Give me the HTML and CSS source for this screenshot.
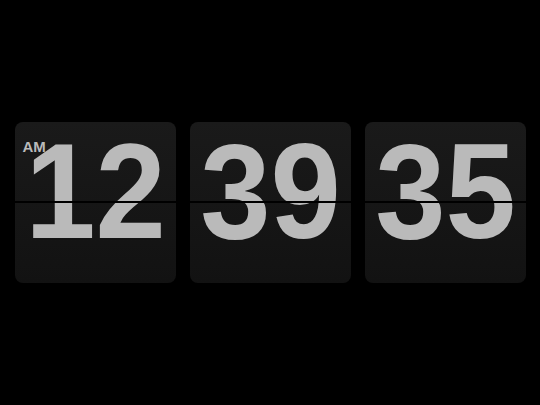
FILE: index.html
```html
<!DOCTYPE html>
<html>
<head>
<meta charset="utf-8">
<link rel="stylesheet" href="styles.css">
</head>
<body>
<div class="clock">
  <div class="card">
    <span class="ampm">AM</span>
    <div class="digits">12</div>
    <div class="split"></div>
  </div>
  <div class="card">
    <div class="digits">39</div>
    <div class="split"></div>
  </div>
  <div class="card">
    <div class="digits">35</div>
    <div class="split"></div>
  </div>
</div>
</body>
</html>
```
FILE: styles.css
```css
html, body {
  margin: 0;
  padding: 0;
  background: #000;
  width: 540px;
  height: 405px;
  overflow: hidden;
}
.clock {
  display: flex;
  gap: 14px;
  justify-content: center;
  align-items: center;
  height: 405px;
}
.card {
  position: relative;
  width: 161px;
  height: 161px;
  border-radius: 8px;
  background: linear-gradient(#1a1a1a, #121212);
}
.digits {
  font-family: "Liberation Sans", Arial, sans-serif;
  font-weight: bold;
  font-size: 136px;
  line-height: 139px;
  color: #bababa;
  text-align: center;
  transform: scaleX(0.93);
}
.ampm {
  position: absolute;
  left: 8px;
  top: 16px;
  font-family: "Liberation Sans", Arial, sans-serif;
  font-weight: bold;
  font-size: 15px;
  color: #bababa;
  z-index: 2;
}
.split {
  position: absolute;
  left: 0;
  right: 0;
  top: 79px;
  height: 2px;
  background: #000;
}
```
